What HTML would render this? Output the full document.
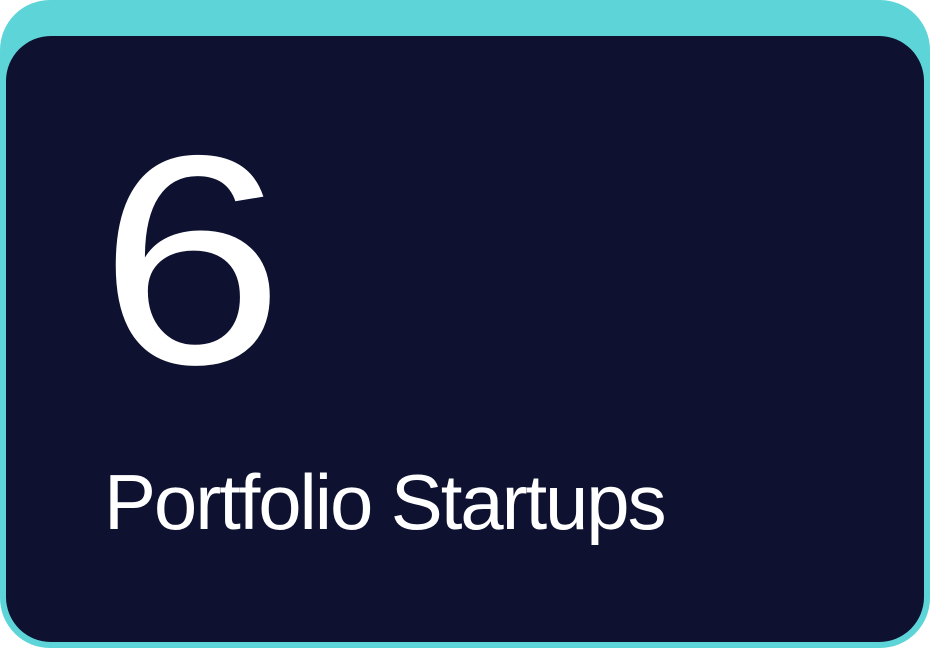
<!DOCTYPE html>
<html><head><style>
html,body{margin:0;padding:0;background:#fff;width:930px;height:648px;overflow:hidden}
.o{position:absolute;left:0;top:0;width:930px;height:648px;background:#5dd5d8;border-radius:50px}
.i{position:absolute;left:6px;top:36px;width:918px;height:606px;background:#0e1130;border-radius:45px}
.n{position:absolute;left:100px;top:112px;font-family:"Liberation Sans",sans-serif;font-size:298px;line-height:298px;color:#fff;transform:scaleX(1.12);transform-origin:10px 0}
.t{position:absolute;left:104px;top:462px;font-family:"Liberation Sans",sans-serif;font-size:78px;line-height:80px;color:#fff;letter-spacing:-2.1px;white-space:nowrap}
</style></head><body>
<div class="o"></div><div class="i"></div>
<div class="n">6</div>
<div class="t">Portfolio Startups</div>
</body></html>
